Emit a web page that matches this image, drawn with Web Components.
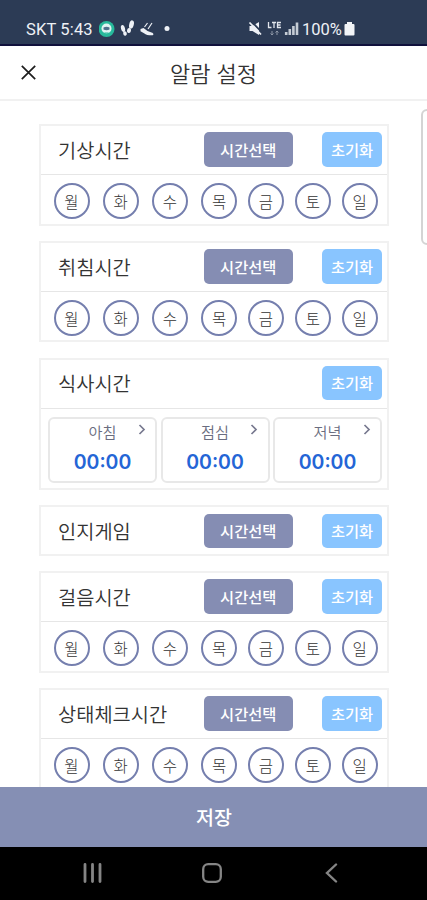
<!DOCTYPE html>
<html lang="ko">
<head>
<meta charset="utf-8">
<title>알람 설정</title>
<style>
html,body{margin:0;height:100%;overflow:hidden;background:#fff}
body{font-family:"Noto Sans CJK KR","Noto Sans",sans-serif;color:#333}
</style>
</head>
<body>
<alarm-app></alarm-app>
<script>
const define = (name, markup, setup) => {
  const tpl = document.createElement('template');
  tpl.innerHTML = markup;
  customElements.define(name, class extends HTMLElement {
    constructor() {
      super();
      this.attachShadow({mode: 'open'}).append(tpl.content.cloneNode(true));
    }
    connectedCallback() { if (setup) setup(this, this.shadowRoot); }
  });
};

define('status-bar', `
<style>
:host{display:flex;box-sizing:border-box;height:46px;background:#2c3b55;border-bottom:2px solid #10113c;padding:18px 72px 0 26px;align-items:flex-start;justify-content:space-between;color:#eef1f6;font:16.500px/22px Roboto,sans-serif}
div{display:flex;height:22px;align-items:center}
span{position:relative;top:.5px}
svg{display:block;flex:none}
</style>
<div><span style="width:73px;letter-spacing:.15px;white-space:nowrap">SKT 5:43</span>
<svg width="75" height="20" viewBox="99 19 75 20">
<circle cx="106.500" cy="29" r="8" fill="#27b99b"/>
<circle cx="106.500" cy="28.500" r="5" fill="#dff3f3"/><path d="M103.500 27.500q3-1.500 6 0v2q-3 1.500-6 0z" fill="#4d718c"/><path d="M104.500 33h4" stroke="#27b99b"/>
<g fill="#eef1f6"><ellipse cx="123" cy="28.500" rx="2" ry="3.500" transform="rotate(-14 123 28.500)"/><ellipse cx="125" cy="33.500" rx="1.800" ry="2.200" transform="rotate(-14 125 33.500)"/><ellipse cx="131.500" cy="24.500" rx="2.300" ry="4.200" transform="rotate(14 131.500 24.500)"/><ellipse cx="129" cy="30.500" rx="2" ry="2.500" transform="rotate(14 129 30.500)"/>
<path d="M140.500 29l3-1 4 3 4 1.500c2.500.600 2.500 2.800.5 2.800-4 0-6-.300-8-2l-3.500-2z"/><circle cx="167" cy="28.500" r="2.500"/></g>
<path d="M144.500 27l3-4M148 29l4-6" stroke="#eef1f6" stroke-width="1.200"/>
</svg></div>
<div><svg width="54" height="20" viewBox="247 19 54 20">
<path d="M248.500 26h3l6.500-4v13l-6.500-4h-3z" fill="#eef1f6"/><path d="M250.500 21.500l11 11.500" stroke="#2c3b55" stroke-width="1.800"/><path d="M248.500 22.500l11.500 12" stroke="#eef1f6" stroke-width="1.800"/>
<path d="M267.500 22v5.500h3M271 22.500h4M273 22.500v5.500M280 22.500h-3.500v5h3.500M276.500 25h3" fill="none" stroke="#e1e5ec" stroke-width="1.300"/>
<path d="M271 31v4M269.500 33.500l1.500 1.500 1.500-1.500M276 35v-4M274.500 32.500l1.500-1.500 1.500 1.500" fill="none" stroke="#8e98a8"/>
<path d="M285.200 35v-3M288.800 35v-6M292.400 35v-9M296 35v-12.500" stroke="#c5ccd5" stroke-width="2.600"/>
</svg><span style="width:42px">100%</span>
<svg width="11" height="16" viewBox="0 0 11 16"><path d="M3 1h5v2h1.500a1 1 0 0 1 1 1v9.500a1 1 0 0 1-1 1h-8a1 1 0 0 1-1-1v-9.500a1 1 0 0 1 1-1h1.500z" fill="#f2f4f7"/></svg></div>`);

define('title-bar', `
<style>
:host{display:grid;grid-template-columns:57px 1fr 57px;align-items:center;box-sizing:border-box;height:54.500px;border-bottom:2px solid #f1f1f1;background:#fff}
svg{display:block;margin-left:21px}
h1{margin:0;text-align:center;font-size:22px;line-height:34px;font-weight:350;color:#333}
</style>
<svg width="15" height="15" viewBox="0 0 15 15"><path d="M.8.8l13.400 13.400M14.200.8L.8 14.200" stroke="#1d1d1d" stroke-width="1.700"/></svg>
<h1><slot></slot></h1>`);

define('action-button', `
<style>
:host{display:flex;align-items:center;justify-content:center;box-sizing:border-box;width:60px;height:34.500px;padding-bottom:1.500px;border-radius:5px;background:#89c5ff;color:#fff;font-size:15.300px;line-height:22px;font-weight:500}
:host([wide]){width:89.500px;background:#858db3}
</style><slot></slot>`);

define('day-chip', `
<style>
:host{display:flex;align-items:center;justify-content:center;box-sizing:border-box;width:36px;height:36px;border:2px solid #757fae;border-radius:50%;font-size:15.500px;line-height:20px;font-weight:300;color:#333}
</style><slot></slot>`);

define('day-row', `
<style>
:host{display:grid;box-sizing:border-box;grid-template-columns:repeat(3,49.200px) repeat(4,46.900px);padding:8px 0 0 12.500px;height:48.500px}
</style>
<day-chip>월</day-chip><day-chip>화</day-chip><day-chip>수</day-chip><day-chip>목</day-chip><day-chip>금</day-chip><day-chip>토</day-chip><day-chip>일</day-chip>`);

define('meal-card', `
<style>
:host{display:flex;flex-direction:column;box-sizing:border-box;width:109px;height:66px;border:2px solid #e8e8e8;border-radius:6px;padding-top:1px}
.top{display:grid;grid-template-columns:1fr 32px 1fr;align-items:center;height:23px;font-size:15.200px;line-height:23px;color:#6a6d80;font-weight:350}
.top span{grid-column:2;white-space:nowrap;text-align:center}
svg{display:block;margin:-4px 0 0 19px}
b{font:600 19.500px/28px Inter,sans-serif;color:#2465d6;text-align:center;margin-top:5px}
</style>
<div class="top"><span><slot></slot></span><svg width="8" height="11" viewBox="0 0 8 11"><path d="M1.500 1l4.500 4.500-4.500 4.500" fill="none" stroke="#77798f" stroke-width="1.700"/></svg></div>
<b>00:00</b>`);

define('alarm-card', `
<style>
:host{display:block;box-sizing:border-box;width:350px;border:2px solid #f1f1f1;background:#fff}
:host([compact]){height:50.500px}
header{display:flex;box-sizing:border-box;align-items:flex-start;height:48px;padding:6.200px 5px 0 17px}
h2{margin:2.600px 0 0;flex:1;font-size:19.800px;line-height:30px;font-weight:350;color:#333;white-space:nowrap}
.body{border-top:1px solid #e6e6e6}
.body[hidden],action-button[hidden]{display:none}
action-button+action-button{margin-left:29px}
</style>
<header><h2></h2><action-button wide>시간선택</action-button><action-button>초기화</action-button></header>
<div class="body"><slot></slot></div>`, (el, root) => {
  root.querySelector('h2').textContent = el.getAttribute('label');
  root.querySelector('action-button').hidden = el.hasAttribute('no-picker');
  root.querySelector('.body').hidden = !el.children.length;
});

define('system-nav', `
<style>
:host{display:grid;grid-template-columns:repeat(3,1fr);height:53px;background:#000;place-items:center;padding:0 36px 0 33px}
svg{display:block;margin-top:-1px}
</style>
<svg width="20" height="20" viewBox="0 0 20 20"><path d="M2 1.500v17M9.500 1.500v17M17 1.500v17" stroke="#858585" stroke-width="2.800" stroke-linecap="round"/></svg>
<svg width="20" height="20" viewBox="0 0 20 20"><rect x="1.200" y="1.200" width="17.600" height="17.600" rx="5" fill="none" stroke="#858585" stroke-width="2.300"/></svg>
<svg width="13" height="20" viewBox="0 0 13 20"><path d="M11 1.500L2 10l9 8.500" fill="none" stroke="#858585" stroke-width="2.400" stroke-linecap="round"/></svg>`);

define('alarm-app', `
<style>
:host{display:flex;flex-direction:column;position:relative;width:427px;height:900px;overflow:hidden;background:#fff}
main{flex:1;min-height:0;overflow:hidden;display:flex;flex-direction:column;gap:15.200px;padding:23.800px 0 0 39px}
alarm-card{flex:none}
.meals{display:flex;box-sizing:border-box;height:79.600px;gap:3.500px;padding:8px 0 0 7px}
.save{display:flex;align-items:center;justify-content:center;height:60px;padding-left:1px;background:#858fb4;color:#fff;font-size:19.500px;line-height:28px;font-weight:500}
.side{position:absolute;left:421px;top:109px;width:30px;height:136px;box-sizing:border-box;border:2px solid #d4d4d4;border-radius:6px}
</style>
<status-bar></status-bar>
<title-bar>알람 설정</title-bar>
<main>
<alarm-card label="기상시간"><day-row></day-row></alarm-card>
<alarm-card label="취침시간"><day-row></day-row></alarm-card>
<alarm-card label="식사시간" no-picker><div class="meals"><meal-card>아침</meal-card><meal-card>점심</meal-card><meal-card>저녁</meal-card></div></alarm-card>
<alarm-card label="인지게임" compact></alarm-card>
<alarm-card label="걸음시간"><day-row></day-row></alarm-card>
<alarm-card label="상태체크시간"><day-row></day-row></alarm-card>
</main>
<div class="save">저장</div>
<system-nav></system-nav>
<div class="side"></div>`);
</script>
</body>
</html>
